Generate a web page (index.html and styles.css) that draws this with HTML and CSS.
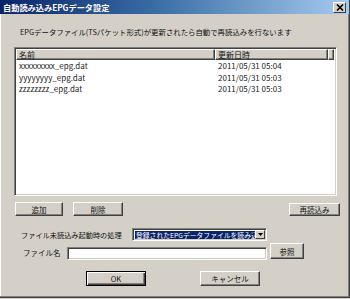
FILE: index.html
```html
<!DOCTYPE html>
<html lang="ja">
<head>
<meta charset="utf-8">
<link rel="stylesheet" href="styles.css">
</head>
<body>
<div class="window">
  <div class="titlebar">
    <span class="title">自動読み込みEPGデータ設定</span>
    <span class="close">
      <svg width="8" height="7" viewBox="0 0 8 7"><path d="M1 0.5 L7 6.5 M7 0.5 L1 6.5" stroke="#000" stroke-width="1.6"/></svg>
    </span>
  </div>
  <div class="desc">EPGデータファイル(TSパケット形式)が更新されたら自動で再読込みを行ないます</div>
  <div class="list">
    <div class="lhead">
      <div class="hcell c1">名前</div>
      <div class="hcell c2">更新日時</div>
      <div class="hcell c3"></div>
    </div>
    <div class="lrow"><div class="cell c1">xxxxxxxxx_epg.dat</div><div class="cell c2">2011/05/31 05:04</div></div>
    <div class="lrow"><div class="cell c1">yyyyyyyy_epg.dat</div><div class="cell c2">2011/05/31 05:03</div></div>
    <div class="lrow"><div class="cell c1">zzzzzzzz_epg.dat</div><div class="cell c2">2011/05/31 05:03</div></div>
  </div>
  <div class="btnrow">
    <div class="btn b-add">追加</div>
    <div class="btn b-del">削除</div>
    <div class="btn b-reload">再読込み</div>
  </div>
  <div class="selrow">
    <div class="lbl lbl-sel">ファイル未読込み起動時の処理</div>
    <div class="select">
      <div class="seltext"><span class="hl">登録されたEPGデータファイルを読み込む</span></div>
      <div class="selbtn">
        <svg width="5" height="3" viewBox="0 0 5 3"><path d="M0 0 H5 L2.5 3 Z" fill="#000"/></svg>
      </div>
    </div>
  </div>
  <div class="filerow">
    <div class="lbl lbl-file">ファイル名</div>
    <div class="input"></div>
    <div class="btn b-ref">参照</div>
  </div>
  <div class="okrow">
    <div class="btn b-ok default">OK</div>
    <div class="btn b-cancel">キャンセル</div>
  </div>
</div>
</body>
</html>
```

FILE: styles.css
```css
html, body {
  margin: 0;
  padding: 0;
  width: 350px;
  height: 299px;
  overflow: hidden;
  background: #d4d0c8;
  font-family: "Noto Sans CJK JP", "DejaVu Sans", sans-serif;
  font-size: 7.5px;
  color: #111;
}

.window {
  box-sizing: border-box;
  width: 350px;
  height: 298px;
  border-right: 1px solid #404040;
  border-bottom: 1px solid #404040;
  box-shadow: inset -1px -1px #808080, inset 1px 0 #ffffff;
  display: flex;
  flex-direction: column;
}

.titlebar {
  height: 14px;
  background: linear-gradient(90deg, #0a246a 0%, #3a6ea5 45%, #a6caf0 100%);
  display: flex;
  align-items: center;
  padding-left: 3px;
  padding-right: 3px;
}

.title {
  color: #fff;
  font-weight: bold;
  font-size: 8.2px;
  line-height: 14px;
  flex: 1;
  white-space: nowrap;
}

.close {
  width: 11px;
  height: 9px;
  background: #d4d0c8;
  border-top: 1px solid #fff;
  border-left: 1px solid #fff;
  border-right: 1px solid #404040;
  border-bottom: 1px solid #404040;
  display: flex;
  align-items: center;
  justify-content: center;
}

.desc {
  margin-top: 13px;
  padding-left: 20px;
  height: 10px;
  line-height: 10px;
  font-size: 7.4px;
  white-space: nowrap;
}

.list {
  margin-top: 10px;
  margin-left: 14px;
  width: 323px;
  height: 149px;
  box-sizing: border-box;
  background: #fff;
  border-top: 1px solid #808080;
  border-left: 1px solid #808080;
  border-right: 1px solid #fff;
  border-bottom: 1px solid #fff;
  box-shadow: inset 1px 1px #404040, inset -1px -1px #d4d0c8;
  padding: 1px 2px 0 1px;
}

.lhead {
  display: flex;
  height: 11px;
}

.hcell {
  box-sizing: border-box;
  height: 11px;
  background: #d4d0c8;
  border-top: 1px solid #fff;
  border-left: 1px solid #fff;
  border-right: 1px solid #404040;
  border-bottom: 1px solid #404040;
  box-shadow: inset -1px -1px #808080;
  line-height: 9px;
  padding-left: 2px;
  font-size: 8px;
  white-space: nowrap;
}

.c1 { width: 199px; }
.c2 { width: 113px; }
.c3 { flex: 1; }

.lrow {
  display: flex;
  height: 11.5px;
  line-height: 11.5px;
  font-size: 8px;
}

.lrow:first-of-type { margin-top: 1px; }

.cell {
  box-sizing: border-box;
  padding-left: 3px;
  white-space: nowrap;
  color: #222;
}

.btn {
  box-sizing: border-box;
  background: #d4d0c8;
  border-top: 1px solid #fff;
  border-left: 1px solid #fff;
  border-right: 1px solid #404040;
  border-bottom: 1px solid #404040;
  box-shadow: inset -1px -1px #808080;
  display: flex;
  align-items: center;
  justify-content: center;
  white-space: nowrap;
}

.btn.default {
  border: 1px solid #000;
  box-shadow: inset 1px 1px #fff, inset -1px -1px #404040, inset -2px -2px #808080;
}

.btnrow {
  margin-top: 6px;
  height: 14px;
  display: flex;
}

.b-add { margin-left: 15px; width: 48px; }
.b-del { margin-left: 10px; width: 50px; }
.b-reload { margin-left: auto; margin-right: 9px; width: 51px; margin-top: 1px; }

.selrow {
  margin-top: 12px;
  height: 13px;
  display: flex;
  align-items: center;
}

.lbl { white-space: nowrap; }
.lbl-sel { margin-left: 21px; width: 111px; font-size: 7.2px; }

.select {
  box-sizing: border-box;
  width: 135px;
  height: 13px;
  background: #fff;
  border-top: 1px solid #808080;
  border-left: 1px solid #808080;
  border-right: 1px solid #fff;
  border-bottom: 1px solid #fff;
  box-shadow: inset 1px 1px #404040, inset -1px -1px #d4d0c8;
  display: flex;
  padding: 1px;
  overflow: hidden;
}

.seltext {
  flex: 1;
  overflow: hidden;
  white-space: nowrap;
  padding: 1px 0 0 1px;
  line-height: 8px;
  font-size: 6.8px;
}

.hl {
  background: #0a246a;
  color: #fff;
  display: inline-block;
  height: 9px;
  line-height: 9px;
  padding-left: 1px;
}

.selbtn {
  box-sizing: border-box;
  width: 10px;
  height: 9px;
  background: #d4d0c8;
  border-top: 1px solid #fff;
  border-left: 1px solid #fff;
  border-right: 1px solid #404040;
  border-bottom: 1px solid #404040;
  display: flex;
  align-items: center;
  justify-content: center;
}

.filerow {
  margin-top: 2px;
  height: 16px;
  display: flex;
  align-items: flex-start;
}

.lbl-file { margin-left: 23px; width: 44px; margin-top: 4px; line-height: 12px; }

.input {
  box-sizing: border-box;
  width: 200px;
  height: 13px;
  margin-top: 4px;
  background: #fff;
  border-top: 1px solid #808080;
  border-left: 1px solid #808080;
  border-right: 1px solid #fff;
  border-bottom: 1px solid #fff;
  box-shadow: inset 1px 1px #404040, inset -1px -1px #d4d0c8;
}

.b-ref { margin-left: 3px; width: 34px; height: 16px; }

.okrow {
  margin-top: 12px;
  height: 15px;
  display: flex;
}

.b-ok { margin-left: 86px; width: 60px; }
.b-cancel { margin-left: 54px; width: 60px; }
```
